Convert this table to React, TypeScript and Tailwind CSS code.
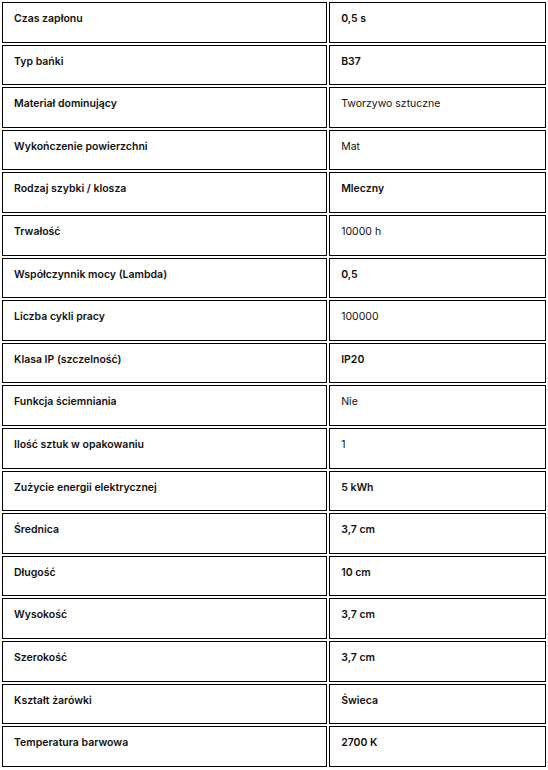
type SpecRow = {
  label: string;
  value: string;
  strong?: boolean;
};

const rows: SpecRow[] = [
  { label: "Czas zapłonu", value: "0,5 s", strong: true },
  { label: "Typ bańki", value: "B37", strong: true },
  { label: "Materiał dominujący", value: "Tworzywo sztuczne" },
  { label: "Wykończenie powierzchni", value: "Mat" },
  { label: "Rodzaj szybki / klosza", value: "Mleczny", strong: true },
  { label: "Trwałość", value: "10000 h" },
  { label: "Współczynnik mocy (Lambda)", value: "0,5", strong: true },
  { label: "Liczba cykli pracy", value: "100000" },
  { label: "Klasa IP (szczelność)", value: "IP20", strong: true },
  { label: "Funkcja ściemniania", value: "Nie" },
  { label: "Ilość sztuk w opakowaniu", value: "1" },
  { label: "Zużycie energii elektrycznej", value: "5 kWh", strong: true },
  { label: "Średnica", value: "3,7 cm", strong: true },
  { label: "Długość", value: "10 cm", strong: true },
  { label: "Wysokość", value: "3,7 cm", strong: true },
  { label: "Szerokość", value: "3,7 cm", strong: true },
  { label: "Kształt żarówki", value: "Świeca", strong: true },
  { label: "Temperatura barwowa", value: "2700 K", strong: true },
];

export default function App() {
  return (
    <div className="bg-white font-['Inter',sans-serif] text-[10.5px] leading-4 text-[#111]">
      <table className="w-full table-fixed border-separate border-spacing-[2px]">
        <tbody>
          {rows.map((row) => (
            <tr key={row.label}>
              <td className="h-[40.6px] w-[60%] border border-black px-[11px] pt-[8px] align-top font-semibold">
                {row.label}
              </td>
              <td
                className={
                  row.strong
                    ? "h-[40.6px] border border-black px-[11px] pt-[8px] align-top font-semibold"
                    : "h-[40.6px] border border-black px-[11px] pt-[8px] align-top font-normal"
                }
              >
                {row.value}
              </td>
            </tr>
          ))}
        </tbody>
      </table>
    </div>
  );
}
